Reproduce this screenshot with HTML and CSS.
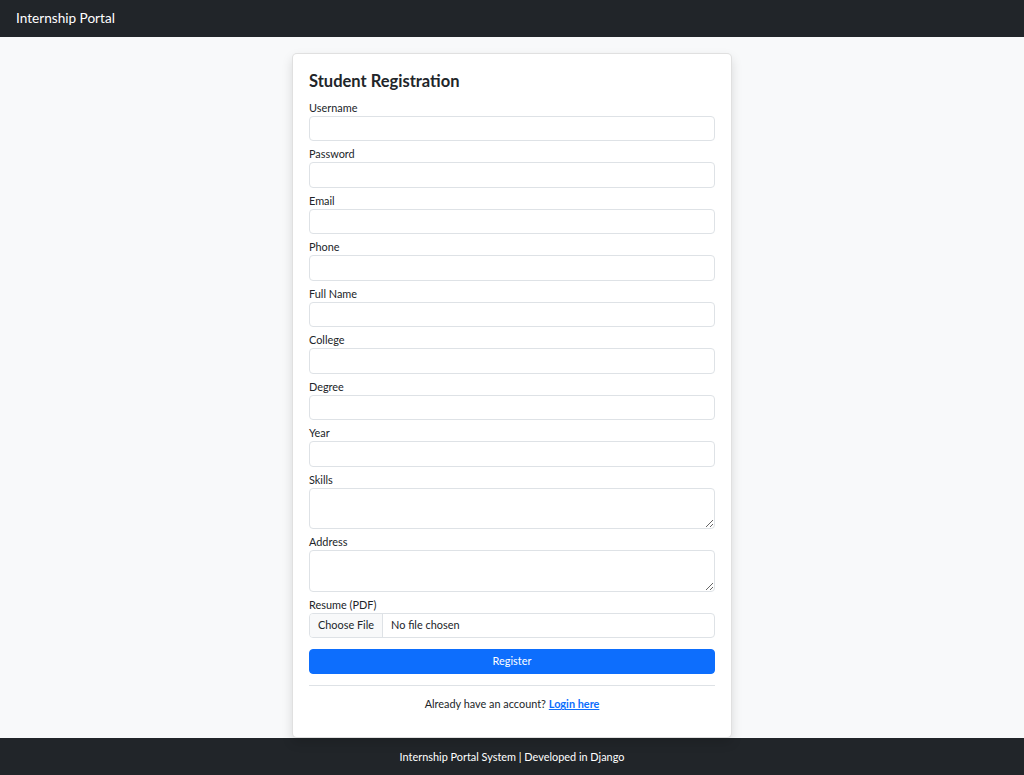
FILE: index.html
```html
<!DOCTYPE html>
<html lang="en">
<head>
  <meta charset="UTF-8">
  <title>Student Registration | Internship Portal</title>
  <link rel="stylesheet" href="styles.css">
</head>
<body>

  <!-- Navbar -->
  <nav class="navbar">
    <a class="brand" href="#">Internship Portal</a>
  </nav>

  <!-- Registration form -->
  <main class="page">
    <div class="card">
      <h3 class="card-title">Student Registration</h3>
      <form class="reg-form" onsubmit="return false;">
        <div class="field">
          <label for="username">Username</label>
          <input type="text" id="username" class="control">
        </div>
        <div class="field">
          <label for="password">Password</label>
          <input type="password" id="password" class="control">
        </div>
        <div class="field">
          <label for="email">Email</label>
          <input type="email" id="email" class="control">
        </div>
        <div class="field">
          <label for="phone">Phone</label>
          <input type="text" id="phone" class="control">
        </div>
        <div class="field">
          <label for="full_name">Full Name</label>
          <input type="text" id="full_name" class="control">
        </div>
        <div class="field">
          <label for="college">College</label>
          <input type="text" id="college" class="control">
        </div>
        <div class="field">
          <label for="degree">Degree</label>
          <input type="text" id="degree" class="control">
        </div>
        <div class="field">
          <label for="year">Year</label>
          <input type="text" id="year" class="control">
        </div>
        <div class="field">
          <label for="skills">Skills</label>
          <textarea id="skills" class="control textarea"></textarea>
        </div>
        <div class="field">
          <label for="address">Address</label>
          <textarea id="address" class="control textarea"></textarea>
        </div>
        <div class="field">
          <label for="resume">Resume (PDF)</label>
          <input type="file" id="resume" class="control file" accept=".pdf">
        </div>
        <button type="submit" class="btn-primary">Register</button>
      </form>
      <hr>
      <p class="login-link">Already have an account? <a href="#">Login here</a></p>
    </div>
  </main>

  <!-- Footer -->
  <footer class="footer">
    Internship Portal System | Developed in Django
  </footer>

</body>
</html>
```

FILE: styles.css
```css
body {
  margin: 0;
  font-family: 'Lato', 'Open Sans', sans-serif;
  font-size: 10.9px;
  line-height: 1.5;
  background: #f8f9fa;
  color: #212529;
}

/* Navbar */
.navbar {
  background: #212529;
  height: 37px;
  padding: 0 16px;
  display: flex;
  align-items: center;
}

.brand {
  color: #fff;
  font-size: 13.6px;
  text-decoration: none;
}

/* Card */
.page {
  display: flex;
  justify-content: center;
  padding-top: 16px;
}

.card {
  width: 440px;
  box-sizing: border-box;
  background: #fff;
  border: 1px solid rgba(0, 0, 0, 0.12);
  border-radius: 5px;
  box-shadow: 0 5px 11px rgba(0, 0, 0, 0.13);
  padding: 16px 16px 16px;
}

.card-title {
  margin: 0 0 8px;
  font-size: 16.5px;
  font-weight: 700;
  line-height: 22px;
}

/* Form */
.reg-form {
  display: flex;
  flex-direction: column;
}

.field {
  display: flex;
  flex-direction: column;
  margin-bottom: 5.2px;
}

.field label {
  line-height: 16px;
}

.control {
  box-sizing: border-box;
  width: 100%;
  height: 25.3px;
  margin: 0;
  padding: 0 8px;
  font: inherit;
  color: #212529;
  background: #fff;
  border: 1px solid #dee2e6;
  border-radius: 4px;
  outline: none;
}

.textarea {
  height: 41.3px;
  padding: 4px 8px;
  resize: vertical;
}

.file {
  padding: 0;
  overflow: hidden;
  margin-bottom: 5.4px;
}

.file::file-selector-button {
  height: 100%;
  margin: 0 8px 0 0;
  padding: 0 8px;
  font: inherit;
  color: #212529;
  background: #f8f9fa;
  border: none;
  border-right: 1px solid #dee2e6;
  border-radius: 0;
}

.btn-primary {
  height: 25.3px;
  font: inherit;
  color: #fff;
  background: #0d6efd;
  border: 1px solid #0d6efd;
  border-radius: 4px;
  cursor: pointer;
}

hr {
  margin: 10.7px 0;
  border: 0;
  border-top: 1px solid #dee2e6;
}

.login-link {
  margin: 0 0 8.5px;
  text-align: center;
}

.login-link a {
  color: #0d6efd;
  font-weight: 700;
}

/* Footer */
.footer {
  background: #212529;
  color: #fff;
  height: 37px;
  display: flex;
  align-items: center;
  justify-content: center;
}
```
